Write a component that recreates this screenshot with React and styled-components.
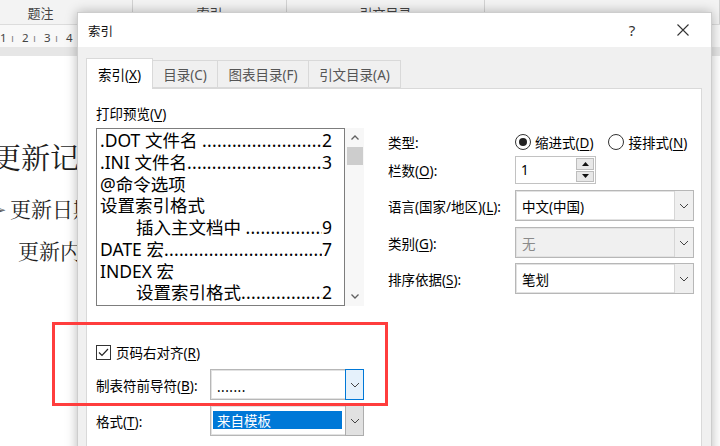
import styled, { createGlobalStyle } from "styled-components";

const GlobalStyle = createGlobalStyle`
  html, body { margin: 0; padding: 0; }
  body {
    width: 720px;
    height: 446px;
    overflow: hidden;
    background: #fff;
    font-family: "Noto Sans", "Noto Sans CJK SC", sans-serif;
  }
  u { text-underline-offset: 2px; text-decoration-thickness: 1px; }
`;

const Screen = styled.div`
  position: relative;
  width: 720px;
  height: 446px;
  overflow: hidden;
  background: #fff;
`;

/* ---------- word window behind the dialog ---------- */

const Ribbon = styled.div`
  display: flex;
  height: 25px;
  background: #f3f3f3;
  border-bottom: 1px solid #dcdcdc;
  box-sizing: border-box;
`;

const RibbonGroup = styled.div`
  width: ${({ $w }) => ($w ? `${$w}px` : "auto")};
  flex: ${({ $w }) => ($w ? "none" : 1)};
  display: flex;
  justify-content: center;
  align-items: center;
  padding-right: ${({ $shift }) => $shift || 0}px;
  box-sizing: border-box;
  border-right: 1px solid #d2d2d2;
  font-family: "Noto Sans CJK SC", sans-serif;
  font-size: 13px;
  color: #444;
`;

const Ruler = styled.div`
  display: flex;
  align-items: flex-end;
  height: 22px;
  padding-bottom: 2px;
  box-sizing: border-box;
  background: #f8f8f8;
  font-family: "Noto Sans", sans-serif;
  font-size: 11.5px;
  color: #444;
`;

const RulerMark = styled.span`
  width: ${({ $w }) => $w}px;
  flex: none;
  color: ${({ $tick }) => ($tick ? "#888" : "#444")};
`;

const RulerShade = styled.div`
  height: 9px;
  background: #e6e6e6;
`;

const Doc = styled.div`
  font-family: "Noto Serif CJK SC", "Noto Sans CJK SC", serif;
  color: #1e1e1e;
`;

const DocHeading = styled.div`
  margin: 83px 0 0 -8px;
  font-size: 29px;
  line-height: 36px;
  white-space: nowrap;
`;

const DocLine = styled.div`
  margin-top: ${({ $mt }) => $mt}px;
  padding-left: ${({ $pl }) => $pl}px;
  font-size: 21px;
  line-height: 30px;
  white-space: nowrap;
`;

const Bullet = styled.span`
  display: inline-block;
  font-size: 12px;
  color: #555;
  margin-left: -4px;
  width: 14px;
  vertical-align: 3px;
`;

/* ---------- dialog ---------- */

const Dialog = styled.div`
  position: absolute;
  left: 77px;
  top: 12px;
  width: 635px;
  height: 450px;
  box-sizing: border-box;
  background: #f0f0f0;
  border: 1px solid #cdcdcd;
  box-shadow: 0 0 11px rgba(0, 0, 0, 0.28);
  display: flex;
  flex-direction: column;
  font-family: "Noto Sans", "Noto Sans CJK SC", sans-serif;
  font-size: 13.5px;
  color: #000;
`;

const TitleBar = styled.div`
  height: 34px;
  flex: none;
  background: #fff;
  display: flex;
  align-items: center;
  padding: 0 5px 0 10px;
`;

const TitleText = styled.div`
  flex: 1;
  font-size: 12.5px;
  color: #111;
`;

const TitleButton = styled.div`
  width: 46px;
  height: 34px;
  display: flex;
  align-items: center;
  justify-content: center;
  margin-left: 5px;
  font-size: 15px;
  color: #333;
`;

const DialogBody = styled.div`
  flex: 1;
  display: flex;
  flex-direction: column;
  padding: 11px 9px 0 8px;
`;

const TabStrip = styled.div`
  display: flex;
  align-items: flex-end;
  height: 30px;
  flex: none;
`;

const Tab = styled.div`
  position: relative;
  z-index: ${({ $active }) => ($active ? 2 : 1)};
  width: ${({ $w }) => $w}px;
  height: ${({ $active }) => ($active ? 31 : 28)}px;
  margin-bottom: ${({ $active }) => ($active ? -1 : 0)}px;
  margin-left: -1px;
  box-sizing: border-box;
  border: 1px solid #d9d9d9;
  border-bottom: ${({ $active }) => ($active ? "none" : "1px solid #d9d9d9")};
  background: ${({ $active }) => ($active ? "#fff" : "#f0f0f0")};
  color: ${({ $active }) => ($active ? "#000" : "#555")};
  display: flex;
  align-items: center;
  justify-content: center;
  &:first-child { margin-left: 0; }
`;

const Panel = styled.div`
  flex: 1;
  background: #fff;
  border: 1px solid #d9d9d9;
  padding: 16px 7px 0 9px;
`;

const TopSection = styled.div`
  display: flex;
  gap: 24px;
`;

const PreviewColumn = styled.div`
  width: 268px;
  flex: none;
`;

const FieldLabel = styled.div`
  line-height: 18px;
  margin-bottom: 5px;
  white-space: nowrap;
`;

const PreviewBox = styled.div`
  display: flex;
  height: 178px;
`;

const ListBox = styled.div`
  flex: 1;
  border: 1px solid #7d7d7d;
  padding: 1px 12px 0 3px;
  overflow: hidden;
  font-size: 17.5px;
  line-height: 21.75px;
  color: #000;
`;

const ListLine = styled.div`
  display: flex;
  white-space: pre;
  padding-left: ${({ $indent }) => ($indent ? 36 : 0)}px;
`;

const Leader = styled.span`
  flex: 1;
  overflow: hidden;
  min-width: 0;
  letter-spacing: 0.3px;
  &::before {
    content: "${".".repeat(80)}";
  }
`;

const ScrollBar = styled.div`
  width: 19px;
  flex: none;
  display: flex;
  flex-direction: column;
  align-items: center;
  background: #f7f7f7;
`;

const ScrollArrow = styled.div`
  height: 19px;
  display: flex;
  align-items: center;
  justify-content: center;
`;

const ScrollThumb = styled.div`
  width: 16px;
  height: 18px;
  background: #cdcdcd;
`;

const ScrollTrack = styled.div`
  flex: 1;
`;

const OptionsColumn = styled.div`
  flex: 1;
  padding-top: 25px;
`;

const FormRow = styled.div`
  display: grid;
  grid-template-columns: ${({ $cols }) => $cols};
  align-items: center;
  height: ${({ $h }) => $h}px;
  margin-top: ${({ $mt }) => $mt || 0}px;
  white-space: nowrap;
`;

const RadioGroup = styled.div`
  display: flex;
  gap: 15px;
`;

const RadioItem = styled.label`
  display: flex;
  align-items: center;
  gap: 4px;
`;

const RadioCircle = styled.span`
  width: 16px;
  height: 16px;
  box-sizing: border-box;
  border: 1px solid #333;
  border-radius: 50%;
  display: flex;
  align-items: center;
  justify-content: center;
  &::after {
    content: "";
    display: ${({ $on }) => ($on ? "block" : "none")};
    width: 8px;
    height: 8px;
    border-radius: 50%;
    background: #222;
  }
`;

const Spinner = styled.div`
  width: 81px;
  height: 28px;
  box-sizing: border-box;
  border: 1px solid #c2c2c2;
  display: flex;
  background: #fff;
`;

const SpinnerValue = styled.div`
  flex: 1;
  padding-left: 5px;
  display: flex;
  align-items: center;
`;

const SpinnerButtons = styled.div`
  width: 18px;
  display: flex;
  flex-direction: column;
  gap: 1px;
  padding: 1px 1px 1px 0;
`;

const SpinButton = styled.div`
  flex: 1;
  background: #e8e8e8;
  border: 1px solid #bdbdbd;
  display: flex;
  align-items: center;
  justify-content: center;
`;

const Select = styled.div`
  width: ${({ $w }) => $w}px;
  height: 31px;
  box-sizing: border-box;
  border: 1px solid #b7b7b7;
  box-shadow: inset 0 0 0 1px #e2e2e2;
  background: ${({ $disabled }) => ($disabled ? "#f0f0f0" : "#fff")};
  color: ${({ $disabled }) => ($disabled ? "#8a8a8a" : "#000")};
  display: flex;
`;

const SelectValue = styled.div`
  flex: 1;
  min-width: 0;
  display: flex;
  align-items: center;
  padding: 0 2px 0 6px;
`;

const Highlight = styled.div`
  flex: 1;
  align-self: stretch;
  margin: 5px 1px 6px -4px;
  padding-left: 4px;
  background: #0078d7;
  color: #fff;
  display: flex;
  align-items: center;
`;

const buttonLooks = {
  plain: "background: #efefef; border-left: 1px solid #d6d6d6;",
  focus: "background: #e5f1fb; border: 1px solid #0078d7;",
  pressed: "background: #e1e1e1; border: 1px solid #adadad;",
};

const DropButton = styled.div`
  width: 19px;
  flex: none;
  box-sizing: border-box;
  display: flex;
  align-items: center;
  justify-content: center;
  ${({ $look }) => buttonLooks[$look || "plain"]}
  margin: ${({ $look }) => ($look && $look !== "plain" ? "-1px -1px -1px 0" : "0")};
`;

const BottomSection = styled.div`
  margin-top: 36px;
`;

const CheckRow = styled.label`
  display: flex;
  align-items: center;
  gap: 5px;
  height: 20px;
`;

const CheckBox = styled.span`
  width: 15px;
  height: 15px;
  box-sizing: border-box;
  border: 1px solid #333;
  display: flex;
  align-items: center;
  justify-content: center;
`;

const Dots = styled.span`
  letter-spacing: 0.5px;
  padding-top: 4px;
`;

const RedFrame = styled.div`
  position: absolute;
  z-index: 10;
  left: 52px;
  top: 322px;
  width: 336px;
  height: 84px;
  box-sizing: border-box;
  border: 3px solid #ff3d3d;
`;

const Chevron = () => (
  <svg width="10" height="6" viewBox="0 0 10 6">
    <polyline points="1,1 5,5 9,1" fill="none" stroke="#444" strokeWidth="1" />
  </svg>
);

const Caret = ({ up }) => (
  <svg width="7" height="4" viewBox="0 0 7 4">
    <polygon points={up ? "0,4 3.5,0 7,4" : "0,0 3.5,4 7,0"} fill="#111" />
  </svg>
);

const ScrollChevron = ({ up }) => (
  <svg width="8" height="5" viewBox="0 0 8 5">
    <polyline
      points={up ? "0.5,4.5 4,1 7.5,4.5" : "0.5,0.5 4,4 7.5,0.5"}
      fill="none"
      stroke="#606060"
      strokeWidth="1.3"
    />
  </svg>
);

const DropDown = ({ w, value, disabled, look, children }) => (
  <Select $w={w} $disabled={disabled}>
    <SelectValue>{children || value}</SelectValue>
    <DropButton $look={look}>
      <Chevron />
    </DropButton>
  </Select>
);

const entries = [
  { text: ".DOT 文件名 ", page: "2" },
  { text: ".INI 文件名", page: "3" },
  { text: "@命令选项" },
  { text: "设置索引格式" },
  { text: "插入主文档中 ", page: "9", indent: true },
  { text: "DATE 宏", page: "7" },
  { text: "INDEX 宏" },
  { text: "设置索引格式", page: "2", indent: true },
];

const rulerMarks = ["1", "ı", "2", "ı", "3", "ı", "4"];

const App = () => {
  return (
    <Screen>
      <GlobalStyle />

      <Ribbon>
        <RibbonGroup $w={133} $shift={51}>题注</RibbonGroup>
        <RibbonGroup $w={154}>索引</RibbonGroup>
        <RibbonGroup $w={198}>引文目录</RibbonGroup>
        <RibbonGroup />
      </Ribbon>
      <Ruler>
        {rulerMarks.map((m, i) => (
          <RulerMark key={i} $w={i % 2 ? 11 : 11} $tick={i % 2 === 1}>
            {m}
          </RulerMark>
        ))}
      </Ruler>
      <RulerShade />
      <Doc>
        <DocHeading>更新记录</DocHeading>
        <DocLine $mt={18} $pl={0}>
          <Bullet>➢</Bullet>更新日期
        </DocLine>
        <DocLine $mt={11} $pl={18}>更新内容</DocLine>
      </Doc>

      <Dialog>
        <TitleBar>
          <TitleText>索引</TitleText>
          <TitleButton>?</TitleButton>
          <TitleButton>
            <svg width="12" height="12" viewBox="0 0 12 12">
              <path d="M0.5 0.5 L11.5 11.5 M11.5 0.5 L0.5 11.5" stroke="#333" strokeWidth="1.1" />
            </svg>
          </TitleButton>
        </TitleBar>

        <DialogBody>
          <TabStrip>
            <Tab $active $w={67}>
              <span>
                索引(<u>X</u>)
              </span>
            </Tab>
            <Tab $w={66}>目录(C)</Tab>
            <Tab $w={92}>图表目录(F)</Tab>
            <Tab $w={93}>引文目录(A)</Tab>
          </TabStrip>

          <Panel>
            <TopSection>
              <PreviewColumn>
                <FieldLabel>
                  打印预览(<u>V</u>)
                </FieldLabel>
                <PreviewBox>
                  <ListBox>
                    {entries.map((e, i) => (
                      <ListLine key={i} $indent={e.indent}>
                        <span>{e.text}</span>
                        {e.page && <Leader />}
                        {e.page && <span>{e.page}</span>}
                      </ListLine>
                    ))}
                  </ListBox>
                  <ScrollBar>
                    <ScrollArrow>
                      <ScrollChevron up />
                    </ScrollArrow>
                    <ScrollThumb />
                    <ScrollTrack />
                    <ScrollArrow>
                      <ScrollChevron />
                    </ScrollArrow>
                  </ScrollBar>
                </PreviewBox>
              </PreviewColumn>

              <OptionsColumn>
                <FormRow $cols="127px 179px" $h={24}>
                  <span>类型:</span>
                  <RadioGroup>
                    <RadioItem>
                      <RadioCircle $on />
                      <span>
                        缩进式(<u>D</u>)
                      </span>
                    </RadioItem>
                    <RadioItem>
                      <RadioCircle />
                      <span>
                        接排式(<u>N</u>)
                      </span>
                    </RadioItem>
                  </RadioGroup>
                </FormRow>
                <FormRow $cols="127px 179px" $h={28} $mt={2}>
                  <span>
                    栏数(<u>O</u>):
                  </span>
                  <Spinner>
                    <SpinnerValue>1</SpinnerValue>
                    <SpinnerButtons>
                      <SpinButton>
                        <Caret up />
                      </SpinButton>
                      <SpinButton>
                        <Caret />
                      </SpinButton>
                    </SpinnerButtons>
                  </Spinner>
                </FormRow>
                <FormRow $cols="127px 179px" $h={31} $mt={6}>
                  <span>
                    语言(国家/地区)(<u>L</u>):
                  </span>
                  <DropDown w={179} value="中文(中国)" />
                </FormRow>
                <FormRow $cols="127px 179px" $h={31} $mt={6}>
                  <span>
                    类别(<u>G</u>):
                  </span>
                  <DropDown w={179} value="无" disabled />
                </FormRow>
                <FormRow $cols="127px 179px" $h={31} $mt={5}>
                  <span>
                    排序依据(<u>S</u>):
                  </span>
                  <DropDown w={179} value="笔划" />
                </FormRow>
              </OptionsColumn>
            </TopSection>

            <BottomSection>
              <CheckRow>
                <CheckBox>
                  <svg width="11" height="9" viewBox="0 0 11 9">
                    <polyline points="1,4.5 4,7.5 10,1" fill="none" stroke="#222" strokeWidth="1.2" />
                  </svg>
                </CheckBox>
                <span>
                  页码右对齐(<u>R</u>)
                </span>
              </CheckRow>
              <FormRow $cols="114px 154px" $h={31} $mt={7}>
                <span>
                  制表符前导符(<u>B</u>):
                </span>
                <DropDown w={154} look="focus">
                  <Dots>.......</Dots>
                </DropDown>
              </FormRow>
              <FormRow $cols="114px 154px" $h={31} $mt={5}>
                <span>
                  格式(<u>T</u>):
                </span>
                <DropDown w={154} look="pressed">
                  <Highlight>来自模板</Highlight>
                </DropDown>
              </FormRow>
            </BottomSection>
          </Panel>
        </DialogBody>
      </Dialog>

      <RedFrame />
    </Screen>
  );
};

export default App;
